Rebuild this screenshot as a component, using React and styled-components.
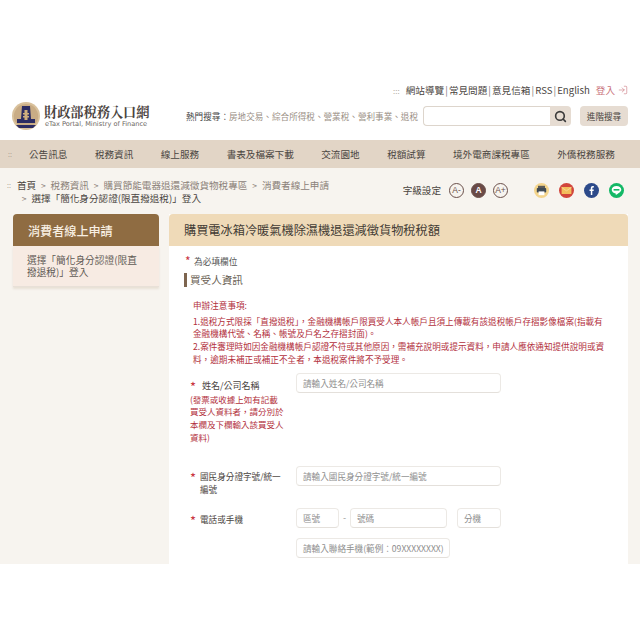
import React from 'react';
import styled, { createGlobalStyle } from 'styled-components';
import { Search, LogIn } from 'lucide-react';

const Global = createGlobalStyle`
  html, body { margin: 0; padding: 0; background: #fff; }
  * { box-sizing: border-box; }
  body { font-family: "Noto Sans CJK TC", "Noto Sans", sans-serif; color: #3c3733; }
`;
const Page = styled.div`height: 564px; padding-top: 80px; overflow: hidden; background: #fff;`;
const Header = styled.header`height: 60px; padding: 2px 12px 0; display: flex; flex-direction: column; background: #fff;`;
const TopLinks = styled.div`display: flex; justify-content: flex-end; align-items: center; height: 16px; font-size: 9.6px; color: #4a4541; white-space: nowrap;`;
const Dots = styled.span`color: #b3aaa0; font-size: 8px; margin-right: 6px;`;
const Sep = styled.span`margin: 0 1.1px; color: #777;`;
const Login = styled.span`color: #c9727a; margin-left: 6px; display: flex; align-items: center; gap: 3px;`;
const HeadRow = styled.div`display: flex; align-items: center; margin-top: 4px;`;
const Brand = styled.div`display: flex; align-items: center; gap: 4px; width: 174px;`;
const BrandText = styled.div`display: flex; flex-direction: column;`;
const BrandTitle = styled.div`font-family: "Noto Serif CJK TC", "Noto Sans CJK TC", serif; font-weight: 700; font-size: 13.2px; line-height: 17px; color: #4a4340; white-space: nowrap;`;
const BrandSub = styled.div`font-family: "DejaVu Sans", sans-serif; font-size: 6.6px; line-height: 9px; color: #6b6560; margin-left: 1px; white-space: nowrap;`;
const Hot = styled.div`width: 237px; font-size: 8.6px; color: #9a8f85; white-space: nowrap; b { font-weight: 400; color: #444; }`;
const SearchBox = styled.div`width: 127px; height: 20px; background: #fff; border: 1px solid #ddd5cc; border-right: 0; border-radius: 4px 0 0 4px;`;
const SearchBtn = styled.div`width: 21px; height: 20px; background: #e6dcd2; border-radius: 0 4px 4px 0; display: flex; align-items: center; justify-content: center; color: #3a3a3a;`;
const Advanced = styled.div`width: 48px; height: 20px; margin-left: 9px; border-radius: 4px; background: #e6dcd2; font-size: 8.6px; color: #4a4541; display: flex; align-items: center; justify-content: center; white-space: nowrap;`;
const Nav = styled.nav`height: 28px; background: #e2d5c6; display: flex; align-items: center; padding-left: 8px; font-size: 9.6px; color: #4a4541; white-space: nowrap; overflow: hidden;`;
const NavDots = styled.span`width: 21px; flex: none; color: #a99c8e; font-size: 7px;`;
const NavItem = styled.span`flex: none; margin-right: 27.5px;`;
const Content = styled.div`background: #f7f4ef; height: 396px; padding: 9px 12px 0 7px;`;
const TopBar = styled.div`display: flex; justify-content: space-between; height: 37px;`;
const Crumbs = styled.div`font-size: 9.6px; line-height: 13px; color: #8b8178; white-space: nowrap; display: flex; gap: 6px; padding-top: 2px; b { font-weight: 400; color: #4a4541; }`;
const CrumbDots = styled.span`color: #a99c8e; font-size: 7px;`;
const Arrow = styled.span`display: inline-block; width: 14.5px; text-align: center; font-size: 8.5px;`;
const Tools = styled.div`display: flex; align-items: center; height: 26px; font-size: 9.6px; color: #4a4541; padding-right: 4px;`;
const SizeBtn = styled.span`width: 15px; height: 15px; border-radius: 50%; margin-left: ${p => p.$first ? 8 : 7}px; border: 1px solid #6a4f4a; background: ${p => p.$on ? '#6a4a47' : 'transparent'}; color: ${p => p.$on ? '#fff' : '#6a4f4a'}; font: ${p => p.$on ? 700 : 400} 8.5px "Liberation Sans", sans-serif; display: flex; align-items: center; justify-content: center;`;
const Share = styled.div`display: flex; gap: 10px; margin-left: 26px;`;
const Columns = styled.div`display: flex; gap: 10px; margin-left: 6px;`;
const Side = styled.aside`width: 146px; flex: none;`;
const SideHead = styled.div`height: 32px; background: #8f6c42; border-radius: 4px 4px 0 0; color: #f8efe2; font-size: 12.1px; font-weight: 500; display: flex; align-items: center; padding-left: 15px;`;
const SideBody = styled.div`background: #f7ebe3; height: 41px; padding: 8px 14px; font-size: 9.7px; line-height: 12.4px; color: #5f5a55; border-bottom: 1px solid #e8e0d8; box-shadow: 0 2px 2px #e8e0d6;`;
const Main = styled.main`flex: 1; height: 360px; background: #fff;`;
const MainHead = styled.div`height: 32px; background: #efdab8; border-radius: 4px 4px 0 0; padding: 0 0 1px 15px; display: flex; align-items: center; font-size: 12.2px; color: #433c35;`;
const MainBody = styled.div`padding: 10px 0 0 15px;`;
const Required = styled.div`font-size: 8.7px; line-height: 12px; margin-left: 1px; color: #555;`;
const Star = styled.span`color: #c9343f; display: inline-block; font-size: ${p => p.$s || 13}px; line-height: 10px; vertical-align: ${p => p.$s ? -1 : -3}px; width: ${p => p.$w || 10}px;`;
const Section = styled.h2`margin: 5px 0 0; font-size: 10.6px; font-weight: 400; line-height: 14px; color: #6a5f55; border-left: 3px solid #7d654f; padding-left: 3px;`;
const Notice = styled.div`margin: 12px 0 0 9px; width: 420px; color: #b2303c; font-size: 8.6px; line-height: 12.7px; white-space: nowrap; p { margin: 0; } p:first-child { margin-bottom: 3px; }`;
const Form = styled.div`margin: 7px 0 0 6px; display: grid; grid-template-columns: 106px 205px;`;
const LabelCell = styled.div`font-size: 8.6px; line-height: 13px; color: #4a4541; padding-top: ${p => p.$pt || 5}px; height: ${p => p.$h}px;`;
const NameLabel = styled.span`font-size: 9px;`;
const Hint = styled.div`color: #b2303c; font-size: 8.5px; line-height: 12.8px; width: 96px; margin-top: 1px;`;
const Indent = styled.div`padding-left: 10px;`;
const Field = styled.div`display: flex; align-items: flex-start; color: #999;`;
const Input = styled.div`width: ${p => p.$w}px; height: 20px; flex: none; border: 1px solid #ece9e5; border-bottom-color: #e4e0db; border-radius: 4px; padding: 0 6px; display: flex; align-items: center; font-size: 8.6px; color: #8e8e8e; background: #fff; white-space: nowrap; margin-left: ${p => p.$ml || 0}px;`;
const Dash = styled.span`width: 11px; text-align: center; font-size: 9px; line-height: 20px;`;
const Icon = styled.svg`width: 15px; height: 15px; display: block;`;

const Logo = () => (
  <svg width="28" height="28" viewBox="0 0 28 28">
    <circle cx="14" cy="14" r="14" fill="#d9c19c" />
    <path d="M14 2a12 12 0 0 1 8 21H6A12 12 0 0 1 14 2z" fill="#c9ac85" />
    <path d="M10 4h8l1 13h4v4H5v-4h4z" fill="#2c2c63" />
    <path d="M4 23h20l-3 3H7z" fill="#2c2c63" />
    <path d="M12.5 8h3v10h-3zM11 11h6v1.4h-6zM11 14h6v1.4h-6z" fill="#cfae7d" />
  </svg>
);
const Printer = () => (
  <Icon viewBox="0 0 15 15"><circle cx="7.5" cy="7.5" r="7.5" fill="#f3d48c" /><rect x="4" y="2.8" width="7" height="2.6" fill="#5a5a5a" /><rect x="2.8" y="5" width="9.4" height="4.6" rx=".8" fill="#3f4a55" /><rect x="4.6" y="8.4" width="5.8" height="3.8" fill="#fff" /></Icon>
);
const Mail = () => (
  <Icon viewBox="0 0 15 15"><circle cx="7.5" cy="7.5" r="7.5" fill="#d2453c" /><rect x="2.6" y="4" width="9.8" height="7" rx=".6" fill="#f3bd5c" /><path d="M2.6 4.4l4.9 3.4 4.9-3.4" fill="none" stroke="#f9dd9b" strokeWidth=".8" /></Icon>
);
const Facebook = () => (
  <Icon viewBox="0 0 15 15"><circle cx="7.5" cy="7.5" r="7.5" fill="#2d4a8a" /><path d="M8.300 12V8h1.300l.2-1.600H8.300v-1c0-.5.2-.8.8-.8h.8V3.200c-.2 0-.7-.1-1.100-.1-1.200 0-2 .7-2 2.100v1.200H5.500V8h1.300v4z" fill="#fff" /></Icon>
);
const Line = () => (
  <Icon viewBox="0 0 15 15"><circle cx="7.5" cy="7.5" r="7.5" fill="#14b866" /><path d="M7.500 3c-2.700 0-4.800 1.700-4.800 3.800 0 1.900 1.700 3.400 3.900 3.700.3.100.2.500.1 1.100 0 .2.100.3.400.2 1.500-.8 5.200-2.900 5.200-5 0-2.100-2.100-3.800-4.800-3.800z" fill="#fff" /><rect x="4.600" y="6" width="5.800" height="1.600" fill="#14b866" /></Icon>
);

const navItems = ['公告訊息', '稅務資訊', '線上服務', '書表及檔案下載', '交流園地', '稅額試算', '境外電商課稅專區', '外僑稅務服務'];
const hotLabel = '熱門搜尋\uFF1A';
const notice1 = '1.退稅方式限採「直撥退稅」\uFF0C金融機構帳戶限買受人本人帳戶且須上傳載有該退稅帳戶存摺影像檔案(指載有';
const notice2 = '金融機構代號、名稱、帳號及戶名之存摺封面)。';
const notice3 = '2.案件審理時如因金融機構帳戶認證不符或其他原因\uFF0C需補充說明或提示資料\uFF0C申請人應依通知提供說明或資';
const notice4 = '料\uFF0C逾期未補正或補正不全者\uFF0C本退稅案件將不予受理。';
const hint = '(發票或收據上如有記載買受人資料者\uFF0C請分別於本欄及下欄輸入該買受人資料)';
const mobile = '請輸入聯絡手機(範例\uFF1A09XXXXXXXX)';

export default function App() {
  return (
    <Page>
      <Global />
      <Header>
        <TopLinks>
          <Dots>:::</Dots>網站導覽<Sep>|</Sep>常見問題<Sep>|</Sep>意見信箱<Sep>|</Sep>RSS<Sep>|</Sep>English
          <Login>登入<LogIn size={10} strokeWidth={1.4} /></Login>
        </TopLinks>
        <HeadRow>
          <Brand>
            <Logo />
            <BrandText>
              <BrandTitle>財政部稅務入口網</BrandTitle>
              <BrandSub>eTax Portal, Ministry of Finance</BrandSub>
            </BrandText>
          </Brand>
          <Hot><b>{hotLabel}</b>房地交易、綜合所得稅、營業稅、營利事業、退稅</Hot>
          <SearchBox />
          <SearchBtn><Search size={13} strokeWidth={3} /></SearchBtn>
          <Advanced>進階搜尋</Advanced>
        </HeadRow>
      </Header>
      <Nav>
        <NavDots>::</NavDots>
        {navItems.map((n) => <NavItem key={n}>{n}</NavItem>)}
      </Nav>
      <Content>
        <TopBar>
          <Crumbs>
            <CrumbDots>::</CrumbDots>
            <div>
              <b>首頁</b><Arrow>&gt;</Arrow>稅務資訊<Arrow>&gt;</Arrow>購買節能電器退還減徵貨物稅專區<Arrow>&gt;</Arrow>消費者線上申請<br />
              <Arrow>&gt;</Arrow><b>選擇「簡化身分認證(限直撥退稅)」登入</b>
            </div>
          </Crumbs>
          <Tools>
            字級設定
            <SizeBtn $first>A-</SizeBtn>
            <SizeBtn $on>A</SizeBtn>
            <SizeBtn>A+</SizeBtn>
            <Share><Printer /><Mail /><Facebook /><Line /></Share>
          </Tools>
        </TopBar>
        <Columns>
          <Side>
            <SideHead>消費者線上申請</SideHead>
            <SideBody>選擇「簡化身分認證(限直撥退稅)」登入</SideBody>
          </Side>
          <Main>
            <MainHead>購買電冰箱冷暖氣機除濕機退還減徵貨物稅稅額</MainHead>
            <MainBody>
              <Required><Star $w={9} $s={12}>*</Star>為必填欄位</Required>
              <Section>買受人資訊</Section>
              <Notice>
                <p>申辦注意事項:</p>
                <p>{notice1}<br />{notice2}<br />{notice3}<br />{notice4}</p>
              </Notice>
              <Form>
                <LabelCell $h={93} $pt={6}>
                  <Star $w={12}>*</Star><NameLabel>姓名/公司名稱</NameLabel>
                  <Hint>{hint}</Hint>
                </LabelCell>
                <Field><Input $w={205}>請輸入姓名/公司名稱</Input></Field>
                <LabelCell $h={42} $pt={4}>
                  <Star>*</Star>國民身分證字號/統一<Indent>編號</Indent>
                </LabelCell>
                <Field><Input $w={205}>請輸入國民身分證字號/統一編號</Input></Field>
                <LabelCell $h={30}><Star>*</Star>電話或手機</LabelCell>
                <Field>
                  <Input $w={43}>區號</Input><Dash>-</Dash><Input $w={97}>號碼</Input><Input $w={44} $ml={10}>分機</Input>
                </Field>
                <LabelCell $h={24} />
                <Field><Input $w={154}>{mobile}</Input></Field>
              </Form>
            </MainBody>
          </Main>
        </Columns>
      </Content>
    </Page>
  );
}
